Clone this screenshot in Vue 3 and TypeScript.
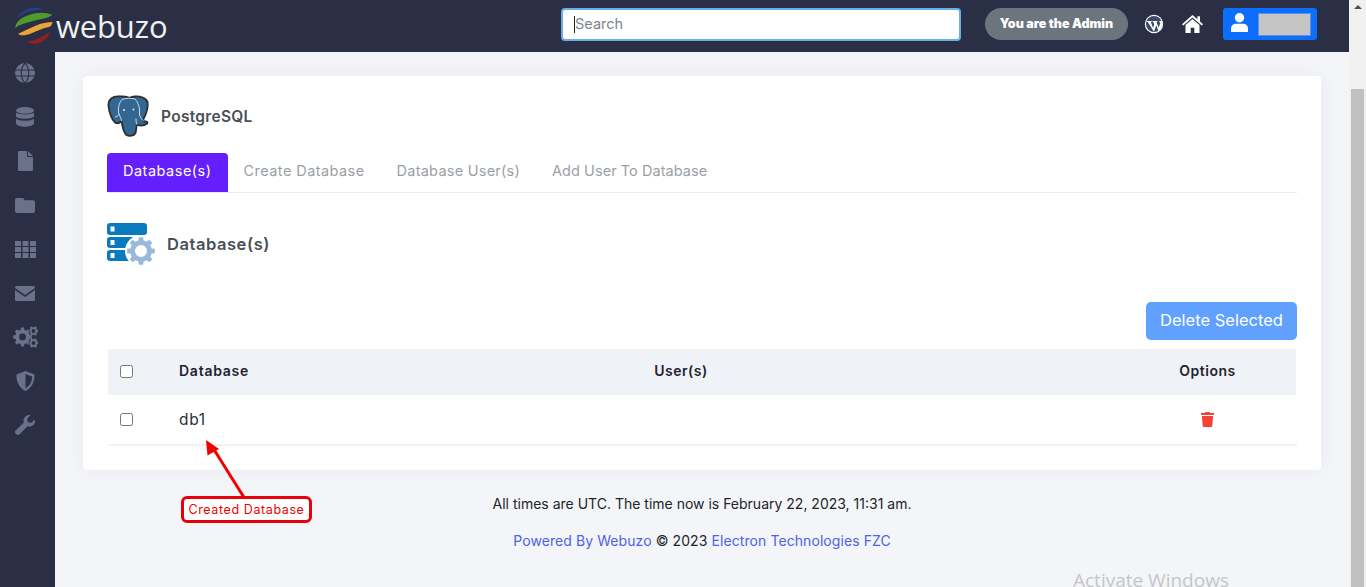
<script setup lang="ts">
function gear(cx: number, cy: number, r: number, hole: number, teeth: number): string {
  const pts: string[] = []
  const inner = r * 0.78
  const step = (Math.PI * 2) / teeth
  for (let i = 0; i < teeth; i++) {
    const a = i * step
    const offs: [number, number][] = [
      [-0.3, inner],
      [-0.2, r],
      [0.2, r],
      [0.3, inner]
    ]
    for (const [o, rad] of offs) {
      const t = a + o * step
      pts.push(`${(cx + rad * Math.cos(t)).toFixed(2)} ${(cy + rad * Math.sin(t)).toFixed(2)}`)
    }
  }
  return (
    `M${pts.join('L')}Z` +
    `M${cx + hole} ${cy}A${hole} ${hole} 0 1 0 ${cx - hole} ${cy}A${hole} ${hole} 0 1 0 ${cx + hole} ${cy}Z`
  )
}
const dbGear = gear(34, 28, 14, 6, 8)
const cogs = gear(9.5, 12, 9.5, 3.4, 8) + gear(20.5, 6, 5, 1.9, 6) + gear(20.5, 18, 5, 1.9, 6)
const tabs = ['Database(s)', 'Create Database', 'Database User(s)', 'Add User To Database']
</script>

<template>
  <div class="page">
    <div class="main">
      <header class="topbar">
        <div class="brand">
          <svg class="globe" width="38" height="38" viewBox="0 0 38 38">
            <path d="M2 11C6 4 14 0 24 1c2 .5 3 1 4 2C18 2 9 6 2 11Z" fill="#23408f" />
            <path d="M.5 21C0 16 5 11 14 8c8-3 17-3 23.500 0-5.500 4-13.500 4-21.500 6.500C9 16.500 3 18 .5 21Z" fill="#4f9a2c" />
            <path d="M3 27c5-3 11-5 17-8 7-3 12-4 17.500-4-.5 3-1.500 4-3.500 5-6 1-12 4-18 6.500-5 2-10 2.500-13 .5Z" fill="#eaa43a" />
            <path d="M12 35c6-1 13-4 23-10-2 6-8 12-16 12-3 0-5-1-7-2Z" fill="#8e1f22" />
          </svg>
          <span class="wordmark">webuzo</span>
        </div>
        <div class="search"><span class="caret"></span><span class="search-ph">Search</span></div>
        <div class="admin">You are the Admin</div>
        <svg class="wp" width="20" height="20" viewBox="0 0 20 20">
          <circle cx="10" cy="10" r="9.200" fill="#fff" />
          <circle cx="10" cy="10" r="8" fill="#3a4a68" />
          <path d="M2.600 7h5.200v.7l-1 .2 2.300 6 1.100-3.400-.9-2.600-.8-.2V7h4.900v.7l-1 .2 2.300 5.900 1.300-4c.3-1 .1-1.600-.7-2.100V7h2.900c.7 2.400.2 5.300-3 10.200h-.6l-2.300-6-2.100 6h-.6L3.800 7.900l-1.200-.2Z" fill="#fff" />
        </svg>
        <svg class="home" width="21" height="18" viewBox="0 0 21 18">
          <path d="M10.500 0 0 9.300l1.300 1.300 9.200-8 9.200 8L21 9.300l-3-2.700V1.300h-2.600v3L10.500 0Z" fill="#fff" />
          <path d="M10.500 4 3.500 10v8h5.200v-5.200h3.600V18h5.200v-8Z" fill="#fff" />
        </svg>
        <div class="userbtn">
          <svg width="17" height="19" viewBox="0 0 17 19">
            <circle cx="8.500" cy="4.700" r="4.700" fill="#fff" />
            <path d="M0 19v-3.500C0 12.500 2.400 10.800 5 10.800h7c2.600 0 5 1.700 5 4.700V19Z" fill="#fff" />
          </svg>
          <span class="userbox"></span>
        </div>
      </header>

      <div class="body">
        <nav class="sidebar">
          <span class="nav-item">
            <svg width="20" height="20" viewBox="0 0 20 20">
              <circle cx="10" cy="10" r="10" fill="#6a7189" />
              <path d="M0 7h20M0 13h20M10 0c-5 5-5 15 0 20M10 0c5 5 5 15 0 20" fill="none" stroke="#2a2f45" stroke-width="1.100" />
            </svg>
          </span>
          <span class="nav-item">
            <svg width="18" height="20" viewBox="0 0 18 20">
              <ellipse cx="9" cy="3.400" rx="9" ry="3.400" fill="#6a7189" />
              <path d="M0 5.600C2 8 16 8 18 5.600V9.400C16 12.400 2 12.400 0 9.400Z" fill="#6a7189" />
              <path d="M0 11.600C2 14.600 16 14.600 18 11.600V16.400C16 20.800 2 20.800 0 16.400Z" fill="#6a7189" />
            </svg>
          </span>
          <span class="nav-item">
            <svg width="15" height="20" viewBox="0 0 15 20">
              <path d="M1 0h8v5.500c0 .3.2.5.5.5H15v13a1 1 0 0 1-1 1H1a1 1 0 0 1-1-1V1a1 1 0 0 1 1-1Z" fill="#6a7189" />
              <path d="M10 0l5 5h-5Z" fill="#6a7189" />
            </svg>
          </span>
          <span class="nav-item">
            <svg width="20" height="15" viewBox="0 0 20 15">
              <path d="M2 0h6l2 2.200h8a2 2 0 0 1 2 2V13a2 2 0 0 1-2 2H2a2 2 0 0 1-2-2V2a2 2 0 0 1 2-2Z" fill="#6a7189" />
            </svg>
          </span>
          <span class="nav-item">
            <svg width="21" height="17" viewBox="0 0 21 17">
              <path d="M0 0h6v5H0ZM7.500 0h6v5h-6ZM15 0h6v5h-6ZM0 6h6v5H0ZM7.500 6h6v5h-6ZM15 6h6v5h-6ZM0 12h6v5H0ZM7.500 12h6v5h-6ZM15 12h6v5h-6Z" fill="#6a7189" />
            </svg>
          </span>
          <span class="nav-item">
            <svg width="20" height="15" viewBox="0 0 20 15">
              <path d="M0 1.500A1.500 1.500 0 0 1 1.500 0h17A1.500 1.500 0 0 1 20 1.500v.6l-10 7-10-7Z" fill="#6a7189" />
              <path d="M0 4l10 7 10-7v9.500a1.500 1.500 0 0 1-1.500 1.500h-17A1.500 1.500 0 0 1 0 13.500Z" fill="#6a7189" />
            </svg>
          </span>
          <span class="nav-item">
            <svg width="25" height="24" viewBox="0 0 25 24"><path :d="cogs" fill="#6a7189" fill-rule="evenodd" /></svg>
          </span>
          <span class="nav-item">
            <svg width="19" height="20" viewBox="0 0 19 20">
              <path d="M9.500 0 18.500 3.500C19 10 16 17 9.500 20 3 17 0 10 .5 3.500Z" fill="#6a7189" />
              <path d="M9.500 3 16 5.500C16.200 10 14 15 9.500 17.200Z" fill="#2a2f45" />
            </svg>
          </span>
          <span class="nav-item">
            <svg width="20" height="20" viewBox="0 0 20 20">
              <path d="M19.800 4.400c.5 2 0 4.100-1.500 5.600-1.600 1.500-3.800 2-5.800 1.300L4.400 19.400a2.100 2.100 0 0 1-3-.1l-.7-.7a2.100 2.100 0 0 1 0-3l8.100-8.100C8.100 5.500 8.600 3.300 10.100 1.700 11.600.2 13.700-.3 15.600.2l-3.300 3.400.5 3.600 3.600.5Z" fill="#6a7189" />
            </svg>
          </span>
        </nav>

        <main class="content">
          <section class="card">
            <div class="app-title">
              <svg width="42" height="42" viewBox="0 0 42 42">
                <path d="M12 1.500C6 1 1 4 1.500 11 2 17 5 25 8 27.500 10 29 12.500 28 14.500 26 15.500 31 16 37 19.500 40 22 41.500 27 41 28.500 38 29.500 35 29 32 30 29.500 33 31 37 31 40 28.500 41 27.500 40 26.500 38.500 26.500 37 26.500 36 25.500 36.500 24 39 19 41.500 12 40.500 7 39.500 3 33 1 28 1.500 26 1.800 24 2.200 22.500 2.800 19 1.500 15 1.300 12 1.500Z" fill="#336791" stroke="#2b3036" stroke-width="1.800" stroke-linejoin="round" />
                <path d="M15 4.500C12 8 10.500 14 12 19c1 3 2.500 4.500 2.500 7M28 4c3 3 5 9 4.500 14-.3 3 1.500 6 4 7.500M12 19c-1 2-2.500 3-4 3M15 4.500C19 3 24 3 28 4M30 29.500c-1-2-1-4-1-6" fill="none" stroke="#dfe8f0" stroke-width=".9" />
                <circle cx="17" cy="15" r="1" fill="#dfe8f0" />
                <circle cx="26.500" cy="14.500" r="1" fill="#dfe8f0" />
              </svg>
              <h1 class="app-name">PostgreSQL</h1>
            </div>

            <div class="tabs">
              <span v-for="(t, i) in tabs" :key="t" class="tab" :class="{ active: i === 0 }">{{ t }}</span>
            </div>

            <div class="section-title">
              <svg width="48" height="42" viewBox="0 0 48 42">
                <rect x="0" y="0" width="40" height="12" rx="3" fill="#0a7abf" />
                <rect x="0" y="14" width="40" height="11" rx="3" fill="#0a7abf" />
                <rect x="0" y="27" width="40" height="11" rx="3" fill="#0a7abf" />
                <rect x="3.500" y="3.500" width="4" height="5" fill="#fff" />
                <rect x="3.500" y="17" width="4" height="5" fill="#fff" />
                <rect x="3.500" y="30" width="4" height="5" fill="#fff" />
                <circle cx="34" cy="28" r="16" fill="#fff" />
                <path :d="dbGear" fill="#9ab9da" fill-rule="evenodd" />
              </svg>
              <h2 class="section-name">Database(s)</h2>
            </div>

            <div class="actions"><button class="delete-btn" type="button">Delete Selected</button></div>

            <div class="grid-row grid-head">
              <span class="check"></span>
              <span class="th">Database</span>
              <span class="th center">User(s)</span>
              <span></span>
              <span class="th center">Options</span>
            </div>
            <div class="grid-row grid-data">
              <span class="check"></span>
              <span class="td">db1</span>
              <span></span>
              <span></span>
              <span class="trash">
                <svg width="13" height="15" viewBox="0 0 13 15">
                  <path d="M4.500 0h4l.6 1.100H13v1.900H0V1.100h3.900Z" fill="#f44336" />
                  <path d="M.9 4h11.200l-.8 10a1.100 1.100 0 0 1-1.100 1H2.800a1.100 1.100 0 0 1-1.100-1Z" fill="#f44336" />
                </svg>
              </span>
            </div>
          </section>

          <p class="foot-time">All times are UTC. The time now is February 22, 2023, 11:31 am.</p>
          <p class="foot-credit"><span class="lnk">Powered By Webuzo</span> © 2023 <span class="lnk">Electron Technologies FZC</span></p>

          <svg class="arrow" width="50" height="62" viewBox="0 0 50 62">
            <path d="M41 59 9 8" stroke="#f00000" stroke-width="3" fill="none" />
            <path d="M2 0 15 9 3.500 15.500Z" fill="#f00000" />
          </svg>
          <div class="callout">Created Database</div>
          <div class="activate">Activate Windows</div>
        </main>
      </div>
    </div>

    <aside class="scrollbar">
      <span class="sb-up"></span>
      <span class="sb-thumb"></span>
    </aside>
  </div>
</template>

<style>
html,
body {
  margin: 0;
  overflow: hidden;
}
</style>

<style scoped>
.page {
  display: flex;
  width: 1366px;
  height: 587px;
  overflow: hidden;
  font-family: Inter, "Noto Sans", sans-serif;
  color: #212529;
  background: #f4f5f8;
}
.main {
  flex: 1;
  display: flex;
  flex-direction: column;
  min-width: 0;
}
.topbar {
  height: 52px;
  flex: none;
  background: #2a2f45;
  display: flex;
  align-items: flex-start;
}
.brand {
  display: flex;
  align-items: center;
  width: 561px;
  padding: 7px 0 0 15px;
  box-sizing: border-box;
}
.wordmark {
  font-family: "Open Sans", sans-serif;
  font-size: 31px;
  line-height: 36px;
  color: #eef0f3;
  margin-left: 3px;
  letter-spacing: -0.2px;
}
.search {
  width: 400px;
  height: 33px;
  margin-top: 8px;
  box-sizing: border-box;
  background: #fff;
  border: 2px solid #6aaee8;
  border-radius: 4px;
  display: flex;
  align-items: center;
  padding-left: 11px;
}
.caret {
  width: 1px;
  height: 17px;
  background: #222;
}
.search-ph {
  font-size: 14.500px;
  line-height: 17px;
  padding-bottom: 2px;
  color: #80858c;
}
.admin {
  margin: 8px 0 0 24px;
  width: 143px;
  height: 32px;
  border-radius: 16px;
  background: #6c757d;
  color: #fff;
  font-size: 12.500px;
  font-weight: 900;
  line-height: 32px;
  text-align: center;
  white-space: nowrap;
}
.wp {
  margin: 14px 0 0 16px;
}
.home {
  margin: 15px 0 0 18px;
}
.userbtn {
  margin: 8px 0 0 20px;
  width: 94px;
  height: 32px;
  box-sizing: border-box;
  background: #0d6efd;
  border-radius: 3px;
  display: flex;
  align-items: center;
  padding: 0 6px 0 8px;
  justify-content: space-between;
}
.userbtn svg {
  margin-top: -3px;
}
.userbox {
  width: 53px;
  height: 23px;
  margin-top: 1px;
  box-sizing: border-box;
  background: #c5c5c5;
  border: 1px solid #5b8fe8;
}
.body {
  flex: 1;
  display: flex;
  min-height: 0;
}
.sidebar {
  width: 55px;
  flex: none;
  background: #2a2f45;
  display: flex;
  flex-direction: column;
  align-items: center;
}
.nav-item {
  height: 44px;
  flex: none;
  display: flex;
  align-items: center;
  justify-content: center;
  width: 50px;
  margin-right: 5px;
}
.nav-item:first-child {
  margin-top: -1px;
}
.content {
  flex: 1;
  position: relative;
  padding: 24px 28px 0;
  min-width: 0;
}
.card {
  background: #fff;
  border-radius: 4px;
  box-shadow: 0 0 20px rgba(30, 40, 80, 0.05);
  height: 394px;
  box-sizing: border-box;
  padding: 19px 24px 0;
}
.app-title {
  display: flex;
  align-items: center;
  height: 42px;
}
.app-name {
  margin: 0 0 0 12px;
  font-size: 15.500px;
  font-weight: 600;
  letter-spacing: 0.3px;
  color: #495057;
}
.tabs {
  display: flex;
  margin-top: 16px;
  height: 40px;
  box-sizing: border-box;
  border-bottom: 1px solid #e9ecef;
}
.tab {
  height: 39px;
  line-height: 36px;
  padding: 0 16px;
  font-size: 14.500px;
  letter-spacing: 0.5px;
  color: #9a9fa6;
  white-space: nowrap;
}
.tab:nth-child(2) {
  letter-spacing: 0.43px;
}
.tab:nth-child(3) {
  letter-spacing: 0.25px;
}
.tab:nth-child(4) {
  letter-spacing: 0.05px;
}
.tab.active {
  background: #651fff;
  color: #fff;
  border-radius: 4px 4px 0 0;
}
.section-title {
  display: flex;
  align-items: center;
  margin-top: 30px;
  height: 42px;
}
.section-name {
  margin: 0 0 0 12px;
  font-size: 16.500px;
  font-weight: 600;
  letter-spacing: 0.55px;
  color: #495057;
}
.actions {
  display: flex;
  justify-content: flex-end;
  margin-top: 37px;
}
.delete-btn {
  width: 151px;
  height: 38px;
  border: 0;
  border-radius: 5px;
  background: #60a0ff;
  color: #fff;
  font: inherit;
  font-size: 16.500px;
  padding: 0 0 2px;
}
.grid-row {
  display: grid;
  grid-template-columns: 71px 300px 404px 235px 179px;
  align-items: center;
  margin: 0 0 0 1px;
}
.grid-head {
  margin-top: 9px;
  height: 46px;
  width: 1188px;
  background: #eff2f7;
}
.grid-data {
  height: 51px;
  width: 1189px;
  box-sizing: border-box;
  border-bottom: 2px solid #eff2f7;
}
.check {
  width: 13px;
  height: 13px;
  box-sizing: border-box;
  margin-left: 12px;
  border: 1px solid #767676;
  border-radius: 2.500px;
  background: #fff;
}
.grid-head .check {
  margin-top: -2px;
}
.th {
  font-size: 14px;
  font-weight: 600;
  letter-spacing: 0.5px;
  line-height: 15px;
  margin-top: -4px;
  color: #1f2430;
}
.th:nth-child(2) {
  letter-spacing: 0.75px;
}
.center {
  text-align: center;
}
.td {
  font-size: 15.500px;
  letter-spacing: 0.7px;
  color: #2a3040;
}
.trash {
  display: flex;
  justify-content: center;
  margin-top: -1px;
}
.foot-time {
  margin: 25px 0 0;
  font-size: 14px;
  line-height: 17px;
  text-align: center;
  color: #212529;
}
.foot-credit {
  margin: 20px 0 0;
  font-size: 14px;
  letter-spacing: 0.08px;
  line-height: 17px;
  text-align: center;
  color: #212529;
}
.lnk {
  color: #4a63e8;
}
.arrow {
  position: absolute;
  left: 149px;
  top: 388px;
}
.callout {
  position: absolute;
  left: 126px;
  top: 444px;
  width: 131px;
  height: 27px;
  box-sizing: border-box;
  border: 3px solid #e8000b;
  border-radius: 6px;
  background: #fff;
  color: #f00000;
  font-size: 12.500px;
  letter-spacing: 0.6px;
  line-height: 21px;
  text-align: center;
  white-space: nowrap;
}
.activate {
  position: absolute;
  left: 1018px;
  top: 515px;
  font-family: "Open Sans", sans-serif;
  font-size: 19px;
  color: #c4c6c9;
  white-space: nowrap;
}
.scrollbar {
  width: 17px;
  flex: none;
  background: #f1f1f1;
  display: flex;
  flex-direction: column;
  align-items: center;
}
.sb-up {
  width: 0;
  height: 0;
  margin-top: 5px;
  border-left: 4px solid transparent;
  border-right: 4px solid transparent;
  border-bottom: 4px solid #505050;
}
.sb-thumb {
  width: 13px;
  flex: 1;
  margin-top: 80px;
  background: #c1c1c1;
}
</style>
